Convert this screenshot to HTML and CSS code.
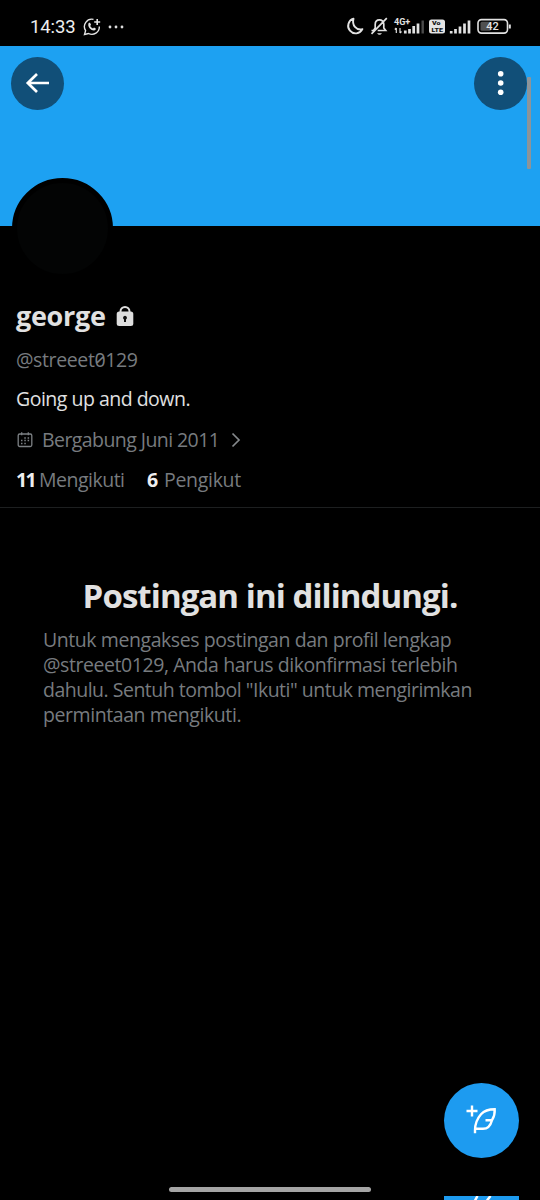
FILE: index.html
```html
<!DOCTYPE html>
<html lang="id">
<head>
<meta charset="utf-8">
<title>george</title>
<link rel="stylesheet" href="styles.css">
</head>
<body>
<div class="screen">
  <header class="status">
    <span class="clock">14:33</span>
    <svg class="chat" width="18" height="18" viewBox="0 0 18 18" fill="none" stroke="#e4e4e4" stroke-width="1.4">
      <path d="M10.5 1.4A7.4 7.4 0 0 0 2.6 12.6L1.5 16.5l4-1A7.4 7.4 0 0 0 16.3 8.5"/>
      <path d="M14.2 1v6M11.2 4h6" stroke-width="1.6"/>
      <path d="M5.3 6.2c.2-1.4 1.5-1.8 2-.9l.7 1.4-.8 1.2c.6 1.2 1.5 2 2.8 2.5l1-.9 1.7.9c.6.7-.5 2-1.8 2-3 0-6-3-5.600-6.200z" fill="#e4e4e4" stroke="none"/>
    </svg>
    <svg class="more" width="16" height="4" viewBox="0 0 16 4" fill="#ddd"><circle cx="2" cy="2" r="1.4"/><circle cx="8" cy="2" r="1.4"/><circle cx="14" cy="2" r="1.4"/></svg>
    <svg class="system" width="170" height="24" viewBox="345 14 170 24" fill="none" stroke="#e2e2e2" stroke-width="1.6">
      <path d="M353.500 18.700a7.500 7.500 0 1 0 8.900 10.500c-6.200 1.300-10.700-4-8.900-10.500z" stroke-width="1.900" stroke-linejoin="round"/>
      <path d="M371.500 30.500h3.200M373.500 30.500l1.700-2.500v-3.500c0-6 8.600-6 8.600-.3v3.800l1.900 2.500h-8M371.500 33.800L386.800 18.200" stroke-width="1.700"/>
      <path d="M377 33.200q2.500 3 5 0z" fill="#e2e2e2" stroke="none"/>
      <text class="net" x="394" y="25.300">4G+</text>
      <path d="M396.300 28v5M394.800 29.500l1.500-1.500M400 28v5M400 33l1.500-1.500" stroke-width="1.200"/>
      <path d="M405.300 30.500v3M409.500 29v4.500M413.700 26v7.500M418 23.500v10" stroke-width="2.700"/>
      <path d="M422.700 20.500v13" stroke="#4b4b4b" stroke-width="2.400"/>
      <rect x="429" y="19.500" width="16" height="14" rx="2.500" fill="#e4e4e4" stroke="none"/>
      <text class="volte" x="432" y="25.200" textLength="8.500" lengthAdjust="spacingAndGlyphs">Vo</text><text class="volte" x="431.500" y="32.400" textLength="11.500" lengthAdjust="spacingAndGlyphs">LTE</text>
      <path d="M451.200 31v2.500M455.500 29v4.500M460 26.500v7M464.500 23.500v10M469 20.500v13" stroke-width="2.700"/>
      <rect x="478" y="19.600" width="29.500" height="13.500" rx="3.500"/>
      <rect x="480.500" y="21.800" width="10.500" height="9" rx="1.500" fill="#505050" stroke="none"/>
      <path d="M509.800 24.500v4" stroke-width="2"/>
      <text class="charge" x="486.200" y="30.300">42</text>
    </svg>
  </header>
  <div class="banner">
    <button class="round" aria-label="Kembali"><svg width="26" height="22" viewBox="0 0 26 22" fill="none" stroke="#fff" stroke-width="2.700"><path d="M24 11H3M12 2L2.800 11l9.200 9"/></svg></button>
    <button class="round" aria-label="Menu"><svg width="8" height="26" viewBox="0 0 8 26" fill="#fff"><circle cx="3.700" cy="3.700" r="2.800"/><circle cx="3.700" cy="13" r="2.800"/><circle cx="3.700" cy="22.300" r="2.800"/></svg></button>
    <div class="avatar"></div>
    <div class="scrollbar"></div>
  </div>
  <section class="profile">
    <h1 class="name"><span>george</span><svg width="18" height="22" viewBox="0 0 18 22"><path d="M4.500 9V6.500a4.500 4.500 0 0 1 9 0V9" fill="none" stroke="#dedede" stroke-width="2"/><rect x=".7" y="6.500" width="16.600" height="14.500" rx="2.500" fill="#dedede"/><path d="M9 10.800a2 2 0 0 0-1 3.700V17h2v-2.500a2 2 0 0 0-1-3.700z" fill="#111"/></svg></h1>
    <p class="handle">@streeet0129</p>
    <p class="bio">Going up and down.</p>
    <p class="joined">
      <svg width="16" height="16" viewBox="0 0 16 16" fill="none" stroke="#7c8084" stroke-width="1.300"><rect x="1.200" y="2" width="13.600" height="12.500" rx="1.500"/><path d="M4.700.3v3M11.300.3v3"/><path d="M4 8.500h1.500M7.300 8.500h1.500M10.600 8.500h1.500M4 11.500h1.500M7.300 11.500h1.500M7.300 6h1.500M10.600 6h1.500" stroke-width="1.500"/></svg>
      <span class="date">Bergabung Juni 2011</span>
      <svg width="10" height="16" viewBox="0 0 10 16" fill="none" stroke="#85898c" stroke-width="1.700"><path d="M1.500 1.500L8 8l-6.500 6.500"/></svg>
    </p>
    <p class="counts"><b class="eleven">11</b><span class="following">Mengikuti</span><b class="six">6</b><span class="followers">Pengikut</span></p>
  </section>
  <main class="protected">
    <h2>Postingan ini dilindungi.</h2>
    <p><span class="l1">Untuk mengakses postingan dan profil lengkap</span><span class="l2">@streeet0129, Anda harus dikonfirmasi terlebih</span><span class="l3">dahulu. Sentuh tombol "Ikuti" untuk mengirimkan</span><span class="l4">permintaan mengikuti.</span></p>
  </main>
  <button class="compose" aria-label="Tulis"><svg width="35" height="35" viewBox="464 1103 35 35" fill="none" stroke="#fff" stroke-width="2.400"><path d="M472 1105.500v11M466.500 1111h11"/><path d="M475 1133.300v-3c0-7 2.500-12 6-16 3.500-3.800 8-5 13.700-5 .3 4.500-.9 8-2.700 10.900h-6.500M492 1120.200c-1.500 5.600-4.500 8.600-9 8.600h-7.500"/></svg></button>
  <div class="peek"><svg width="24" height="4" viewBox="0 0 24 4" fill="none" stroke="#fff" stroke-width="2.500"><path d="M3 4.500L5.500 0M15 4.500L18.500 0"/></svg></div>
  <div class="homebar"></div>
</div>
</body>
</html>
```
FILE: styles.css
```css
* { box-sizing: border-box; margin: 0; padding: 0; }
body { background: #000; font-family: "Open Sans", sans-serif; color: #e1e1e1; }
button { border: 0; }
svg { display: block; flex: none; }
.screen { position: relative; width: 540px; height: 1200px; overflow: hidden; background: #000; white-space: nowrap; }

.status { height: 46px; display: flex; align-items: center; padding: 7px 25px 0 30px; }
.clock { width: 45px; font: 400 18.5px/20px Roboto, sans-serif; letter-spacing: -.1px; color: #eee; }
.chat { margin-left: 8px; }
.more { margin-left: 7px; }
.system { margin-left: auto; margin-top: -1px; }
.system text { font-family: Roboto, sans-serif; font-weight: 700; fill: #e2e2e2; stroke: none; }
.system .net { font-size: 9px; }
.system .volte { font-size: 6.100px; font-weight: 900; fill: #111; }
.system .charge { font-size: 11px; font-weight: 500; }

.banner { position: relative; height: 180px; background: #1da1f2; display: flex; justify-content: space-between; align-items: flex-start; padding: 10.500px 13px 0 11px; }
.round { width: 53px; height: 53px; border-radius: 50%; background: #114f78; display: flex; align-items: center; justify-content: center; }
.avatar { position: absolute; left: 12px; top: 132px; width: 101px; height: 101px; border-radius: 50%; border: 5px solid #000; background: #030404; }
.scrollbar { position: absolute; left: 527px; top: 31px; width: 4px; height: 92px; background: #8d9499; border-radius: 1px; }

.profile { height: 282px; padding: 73px 16px 0; border-bottom: 1px solid #1d1f20; font-size: 19.500px; letter-spacing: -.5px; }
.name { display: flex; align-items: center; height: 34px; font-size: 27px; line-height: 34px; font-weight: 700; }
.name span { width: 100px; letter-spacing: -.300px; }
.name svg { margin-top: -1px; }
.handle { margin-top: 14px; line-height: 26px; color: #777b7f; font-feature-settings: "zero"; letter-spacing: -.380px; }
.bio { margin-top: 13px; line-height: 26px; }
.joined { margin-top: 15px; height: 26px; line-height: 26px; display: flex; align-items: center; color: #777b7f; padding-left: 1px; }
.joined .date { width: 198px; padding-left: 9px; letter-spacing: -.570px; }
.counts { margin-top: 14px; line-height: 26px; display: flex; color: #777b7f; }
.counts b { color: #eee; }
.eleven { width: 23px; letter-spacing: -1.700px; }
.following { width: 108px; }
.six { width: 17px; }
.followers { letter-spacing: -.300px; }

.protected { padding: 66px 43px 0; color: #777b7f; }
.protected h2 { height: 44px; line-height: 44px; text-align: center; font-size: 33px; color: #e1e1e1; letter-spacing: -.930px; }
.protected p { margin-top: 9px; font-size: 19.500px; line-height: 25px; letter-spacing: -.430px; }
.protected span { display: block; }
.protected .l3 { letter-spacing: -.500px; }

.compose { position: absolute; left: 444px; top: 1083px; width: 75px; height: 75px; border-radius: 50%; background: #1d9bf0; display: flex; align-items: center; justify-content: center; }
.peek { position: absolute; left: 444px; top: 1196px; width: 75px; height: 4px; background: #1d9bf0; padding-left: 28px; }
.homebar { position: absolute; left: 169px; top: 1187px; width: 202px; height: 5px; border-radius: 3px; background: #a5a5a5; }
```
